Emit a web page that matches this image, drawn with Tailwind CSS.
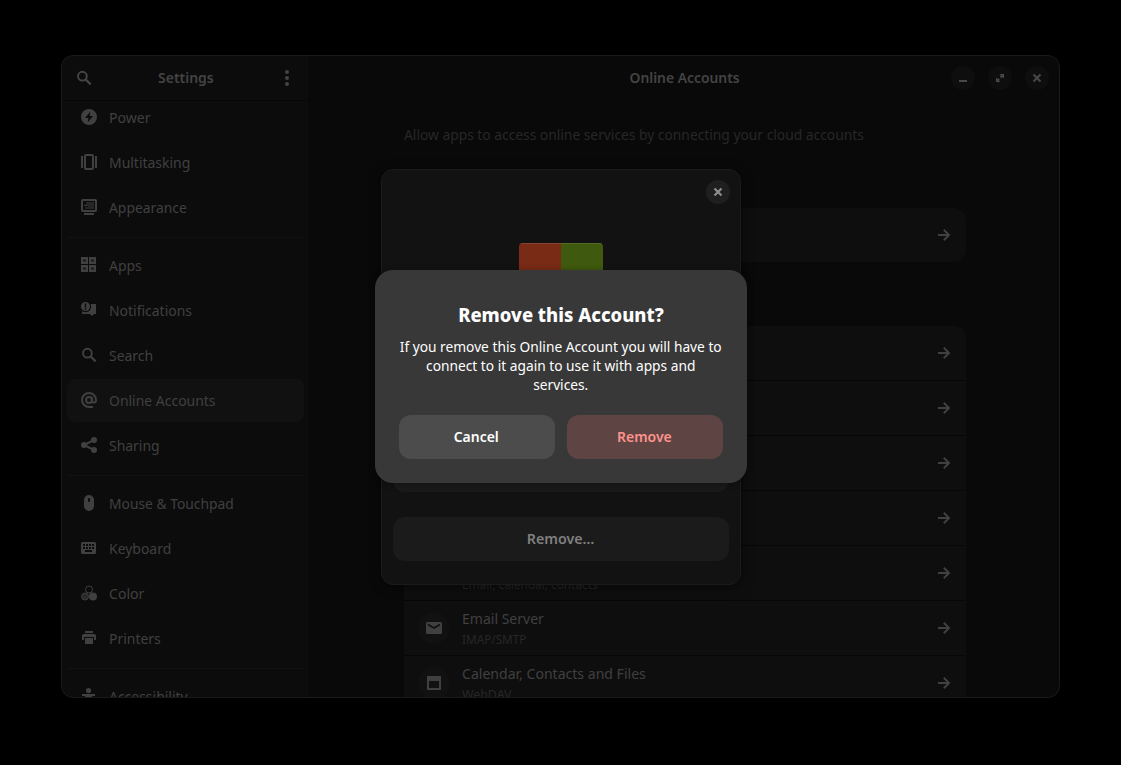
<!DOCTYPE html>
<html lang="en">
<head>
<meta charset="utf-8">
<title>Settings – Online Accounts</title>
<script src="https://cdn.jsdelivr.net/npm/@tailwindcss/browser@4"></script>
</head>
<body class="h-screen overflow-hidden bg-black font-['Noto_Sans','Open_Sans',sans-serif] text-[15px] text-[#404040]">
<svg class="hidden">
  <symbol id="search" viewBox="0 0 16 16"><circle cx="6.4" cy="6.2" r="4.4" fill="none" stroke="currentColor" stroke-width="2"/><path d="M9.6 9.4l5 5" stroke="currentColor" stroke-width="2.2"/></symbol>
  <symbol id="arrow" viewBox="0 0 16 16"><path d="M2 8h10M7.8 2.8L13 8l-5.2 5.2" fill="none" stroke="currentColor" stroke-width="2"/></symbol>
  <symbol id="close" viewBox="0 0 16 16"><path d="M4.5 4.5l7 7m0-7l-7 7" stroke="currentColor" stroke-width="2.1"/></symbol>
</svg>
<div class="h-full px-[61px] pt-[55px]">
  <div class="relative flex h-[643px] w-[999px] overflow-hidden rounded-xl bg-[#090909]">
    <aside class="flex w-[249px] shrink-0 flex-col bg-[#0c0c0c] border-r border-[#070707]">
      <header class="flex h-[46px] shrink-0 items-center justify-between border-b border-[#070707] pl-[15px] pr-[14px] text-[#444]">
        <svg class="size-4"><use href="#search"/></svg>
        <span class="origin-center scale-x-[.93] font-semibold">Settings</span>
        <svg class="size-4" viewBox="0 0 16 16" fill="currentColor"><circle cx="8" cy="2" r="2"/><circle cx="8" cy="8" r="2"/><circle cx="8" cy="14" r="2"/></svg>
      </header>
      <nav class="min-h-0 flex-1 overflow-hidden pr-[5px] pl-[6px]">
        <div class="-mt-[6px]">
          <div class="flex h-[45px] items-center gap-3 pl-[14px]"><svg class="-mt-px size-4 shrink-0" viewBox="0 0 16 16"><path fill="currentColor" fill-rule="evenodd" d="M8 0a8 8 0 100 16A8 8 0 008 0zM9.3 2.8L8.7 7H12l-5.2 6.2L7.400 9H4z"/></svg><span class="origin-left scale-x-[.94]">Power</span></div>
          <div class="flex h-[45px] items-center gap-3 pl-[14px]"><svg class="-mt-px size-4 shrink-0" viewBox="0 0 16 16" fill="none" stroke="currentColor" stroke-width="2"><rect x="4" y="1" width="8" height="14" rx="1"/><path d="M1 2v12M15 2v12"/></svg><span class="origin-left scale-x-[.93]">Multitasking</span></div>
          <div class="flex h-[45px] items-center gap-3 pl-[14px]"><svg class="-mt-px size-4 shrink-0" viewBox="0 0 16 16"><rect x="1" y="1" width="14" height="11" rx="1" fill="none" stroke="currentColor" stroke-width="2"/><path d="M3 14h10v2H3zM5.500 3h1v4H3V6h2.500z" fill="currentColor"/><path d="M7 3h6v7H4V8h3z" fill="currentColor" opacity=".5"/></svg><span class="origin-left scale-x-[.925]">Appearance</span></div>
        </div>
        <div class="mt-[7px] mb-[5px] h-px bg-[#121212]"></div>
        <div>
          <div class="flex h-[45px] items-center gap-3 pl-[14px]"><svg class="-mt-px size-4 shrink-0" viewBox="0 0 16 16" fill="none" stroke="currentColor" stroke-width="2.400"><path d="M1.200 1.200h4.600v4.600H1.200zM9.200 1.200h4.600v4.600H9.200zM1.200 9.200h4.600v4.600H1.200zM9.200 9.200h4.600v4.600H9.200z"/></svg><span class="origin-left scale-x-[.93]">Apps</span></div>
          <div class="flex h-[45px] items-center gap-3 pl-[14px]"><svg class="-mt-px size-4 shrink-0" viewBox="0 0 16 16" fill="currentColor"><path fill-rule="evenodd" d="M4.500 0a4.500 4.500 0 100 9 4.500 4.500 0 000-9zM3.700 1.500h1.600v4H3.700zM3.700 6.300h1.600v1.500H3.700z"/><path d="M9.500 2H15v10h-2l-2 2-2-2H1V9.300c1 .6 2.200.900 3.500.900A5.600 5.600 0 009.500 2z"/></svg><span class="origin-left scale-x-[.93]">Notifications</span></div>
          <div class="flex h-[45px] items-center gap-3 pl-[14px]"><svg class="-mt-px size-4 shrink-0"><use href="#search"/></svg><span class="origin-left scale-x-[.93]">Search</span></div>
          <div class="my-px flex h-[43px] items-center gap-3 rounded-lg bg-[#111] pl-[14px]"><svg class="-mt-px size-4 shrink-0" viewBox="0 0 16 16" fill="none" stroke="currentColor" stroke-width="2"><circle cx="8" cy="8" r="2.900"/><path d="M11 5v3.600a2 2 0 004 0V8a7 7 0 10-7 7h4"/></svg><span class="origin-left scale-x-[.93]">Online Accounts</span></div>
          <div class="flex h-[45px] items-center gap-3 pl-[14px]"><svg class="-mt-px size-4 shrink-0" viewBox="0 0 16 16" fill="currentColor"><path d="M13 3L3 8l10 5" fill="none" stroke="currentColor" stroke-width="2"/><circle cx="13" cy="3" r="3"/><circle cx="3" cy="8" r="3"/><circle cx="13" cy="13" r="3"/></svg><span class="origin-left scale-x-[.93]">Sharing</span></div>
        </div>
        <div class="mt-[7px] mb-[5px] h-px bg-[#121212]"></div>
        <div>
          <div class="flex h-[45px] items-center gap-3 pl-[14px]"><svg class="-mt-px size-4 shrink-0" viewBox="0 0 16 16"><path fill="currentColor" fill-rule="evenodd" d="M8 0a5 5 0 00-5 5v6a5 5 0 0010 0V5a5 5 0 00-5-5zM8 3a1 1 0 011 1v2a1 1 0 01-2 0V4a1 1 0 011-1z"/></svg><span class="origin-left scale-x-[.922]">Mouse &amp; Touchpad</span></div>
          <div class="flex h-[45px] items-center gap-3 pl-[14px]"><svg class="-mt-px size-4 shrink-0" viewBox="0 0 16 16"><path fill="currentColor" fill-rule="evenodd" d="M1.500 2h12A1.500 1.500 0 0115 3.500v9a1.500 1.500 0 01-1.500 1.500h-12A1.500 1.500 0 010 12.500v-9A1.500 1.500 0 011.500 2zM2 4v2h2V4zm3 0v2h2V4zm3 0v2h2V4zm3 0v2h2V4zM2 7v2h2V7zm3 0v2h2V7zm3 0v2h2V7zm3 0v2h2V7zM4 10v2h7v-2z"/></svg><span class="origin-left scale-x-[.93]">Keyboard</span></div>
          <div class="flex h-[45px] items-center gap-3 pl-[14px]"><svg class="-mt-px size-4 shrink-0" viewBox="0 0 16 16"><circle cx="8" cy="4.500" r="3.500" fill="none" stroke="currentColor"/><circle cx="4" cy="11.500" r="3.500" fill="#292929" stroke="currentColor"/><circle cx="12" cy="11.500" r="4" fill="currentColor"/></svg><span class="origin-left scale-x-[.94]">Color</span></div>
          <div class="flex h-[45px] items-center gap-3 pl-[14px]"><svg class="-mt-px size-4 shrink-0" viewBox="0 0 16 16" fill="currentColor"><path d="M4 1h8v2H4zM3 4h10a2 2 0 012 2v4h-2V7H3v3H1V6a2 2 0 012-2zM4 8h8v6H4z"/></svg><span class="origin-left scale-x-[.93]">Printers</span></div>
        </div>
        <div class="mt-[7px] mb-[5px] h-px bg-[#121212]"></div>
        <div class="flex h-[45px] items-center gap-3 pl-[14px]"><svg class="-mt-px size-4 shrink-0" viewBox="0 0 16 16" fill="currentColor"><circle cx="7.500" cy="2.600" r="2.600"/><path d="M1 6h13v2h-3v8H9v-4H6v4H4V8H1z"/></svg><span class="origin-left scale-x-[.93]">Accessibility</span></div>
      </nav>
    </aside>
    <main class="flex min-w-0 flex-1 flex-col">
      <header class="grid h-[46px] shrink-0 grid-cols-[1fr_auto_1fr] items-center">
        <span></span>
        <span class="col-start-2 -mt-px scale-x-[.925] font-semibold text-[#444]">Online Accounts</span>
        <div class="flex justify-end gap-[13px] pr-[11px] text-[#484848]">
          <span class="flex size-6 items-center justify-center rounded-full bg-[#0e0e0e]"><svg class="size-4" viewBox="0 0 16 16"><path d="M4 10h8v2H4z" fill="currentColor"/></svg></span>
          <span class="flex size-6 items-center justify-center rounded-full bg-[#0e0e0e]"><svg class="size-4" viewBox="0 0 16 16"><path d="M7.500 4H12v4.500l-1.500-1.500-1.300 1.200-1.400-1.400L9 5.500zM8.500 12H4V7.500l1.500 1.500.9-.8 1.400 1.400-.8.900z" fill="currentColor"/></svg></span>
          <span class="flex size-6 items-center justify-center rounded-full bg-[#0e0e0e]"><svg class="size-4"><use href="#close"/></svg></span>
        </div>
      </header>
      <div class="min-h-0 flex-1 overflow-hidden pl-[94px] pr-[94px]">
        <p class="mt-[21px] h-6 leading-6"><span class="inline-block origin-left scale-x-[.92] whitespace-nowrap text-[#272727]">Allow apps to access online services by connecting your cloud accounts</span></p>
        <section class="mt-[62px] flex h-[54px] items-center justify-end rounded-xl bg-[#0e0e0e] pr-[14px]"><svg class="size-4"><use href="#arrow"/></svg></section>
        <section class="mt-[64px] divide-y divide-[#070707] rounded-t-xl bg-[#0e0e0e]">
          <div class="flex h-[55px] items-center justify-end pr-[14px]"><svg class="size-4"><use href="#arrow"/></svg></div>
          <div class="flex h-[55px] items-center justify-end pr-[14px]"><svg class="size-4"><use href="#arrow"/></svg></div>
          <div class="flex h-[55px] items-center justify-end pr-[14px]"><svg class="size-4"><use href="#arrow"/></svg></div>
          <div class="flex h-[55px] items-center justify-end pr-[14px]"><svg class="size-4"><use href="#arrow"/></svg></div>
          <div class="flex h-[55px] items-center pr-[14px] pl-[58px]"><div class="flex-1 pt-[23px] text-[12.5px] leading-4 text-[#272727]"><span class="inline-block origin-left scale-x-[.945]">Email, calendar, contacts</span></div><svg class="size-4"><use href="#arrow"/></svg></div>
          <div class="flex h-[55px] items-center gap-3 px-[14px]">
            <span class="flex size-8 items-center justify-center rounded-full bg-[#111]"><svg class="size-4" viewBox="0 0 16 16"><rect y="2" width="16" height="12" rx="1.500" fill="currentColor"/><path d="M2 4.500l6 3.500 6-3.500" fill="none" stroke="#111" stroke-width="1.800"/></svg></span>
            <div class="flex-1 pt-px"><div class="leading-[21px]"><span class="inline-block origin-left scale-x-[.935]">Email Server</span></div><div class="text-[12.5px] leading-[21px] text-[#272727]"><span class="inline-block origin-left scale-x-[.94]">IMAP/SMTP</span></div></div>
            <svg class="size-4"><use href="#arrow"/></svg>
          </div>
          <div class="flex h-[54px] items-center gap-3 px-[14px]">
            <span class="flex size-8 items-center justify-center rounded-full bg-[#111]"><svg class="size-4" viewBox="0 0 16 16"><path fill="currentColor" fill-rule="evenodd" d="M1 1h14v14H1zM3 6v7h10V6z"/></svg></span>
            <div class="flex-1 pt-px"><div class="leading-[21px]"><span class="inline-block origin-left scale-x-[.937]">Calendar, Contacts and Files</span></div><div class="text-[12.5px] leading-[21px] text-[#272727]"><span class="inline-block origin-left scale-x-[.99]">WebDAV</span></div></div>
            <svg class="size-4"><use href="#arrow"/></svg>
          </div>
        </section>
      </div>
    </main>
    <div class="pointer-events-none absolute inset-0 rounded-xl border border-[#1a1a1a]"></div>
  </div>
</div>

<!-- Account details dialog -->
<div class="absolute top-[169px] left-[381px] flex h-[416px] w-[360px] flex-col overflow-hidden rounded-xl border border-[#1b1b1b] bg-[#121212] px-[11px] text-[#808080] shadow-[0_2px_12px_rgba(0,0,0,.5)]">
  <div class="-mr-px flex h-[44px] items-center justify-end"><span class="flex size-6 items-center justify-center rounded-full bg-[#1f1f1f] text-[#909090]"><svg class="size-4"><use href="#close"/></svg></span></div>
  <div class="mx-auto mt-[29px] grid h-[84px] w-[84px] grid-cols-2 grid-rows-2 overflow-hidden rounded-[4px]"><i class="border-t border-[#874230] bg-[#792b16]"></i><i class="border-t border-[#546b28] bg-[#3f5a0e]"></i><i class="bg-[#005277]"></i><i class="bg-[#7f5c00]"></i></div>
  <div class="mt-[121px] h-[44px] rounded-xl bg-[#1a1a1a]"></div>
  <div class="mt-[25px] flex h-[44px] shrink-0 items-center justify-center rounded-xl bg-[#1b1b1b] font-semibold"><span class="-mt-[2px] scale-x-[.95]">Remove…</span></div>
</div>

<!-- Confirmation alert -->
<div class="absolute top-[270px] left-[375px] flex h-[213px] w-[372px] flex-col rounded-[18px] bg-[#383838] px-6 pt-[31px] text-center text-white shadow-[0_1px_6px_rgba(0,0,0,.35)]">
  <h2 class="text-[19px] leading-7 font-extrabold"><span class="inline-block scale-x-[.97] whitespace-nowrap">Remove this Account?</span></h2>
  <p class="-mx-10 mt-2 leading-[19px]"><span class="inline-block scale-x-[.916] whitespace-nowrap">If you remove this Online Account you will have to<br>connect to it again to use it with apps and<br>services.</span></p>
  <div class="mt-[21px] flex gap-3 font-semibold">
    <button class="h-11 flex-1 rounded-xl bg-[#4c4c4c] pb-[2px]"><span class="inline-block -translate-x-px scale-x-[.93]">Cancel</span></button>
    <button class="h-11 flex-1 rounded-xl bg-[#5e4544] pb-[2px] text-[#ff938c]"><span class="inline-block -translate-x-px scale-x-[.93]">Remove</span></button>
  </div>
</div>
</body>
</html>
